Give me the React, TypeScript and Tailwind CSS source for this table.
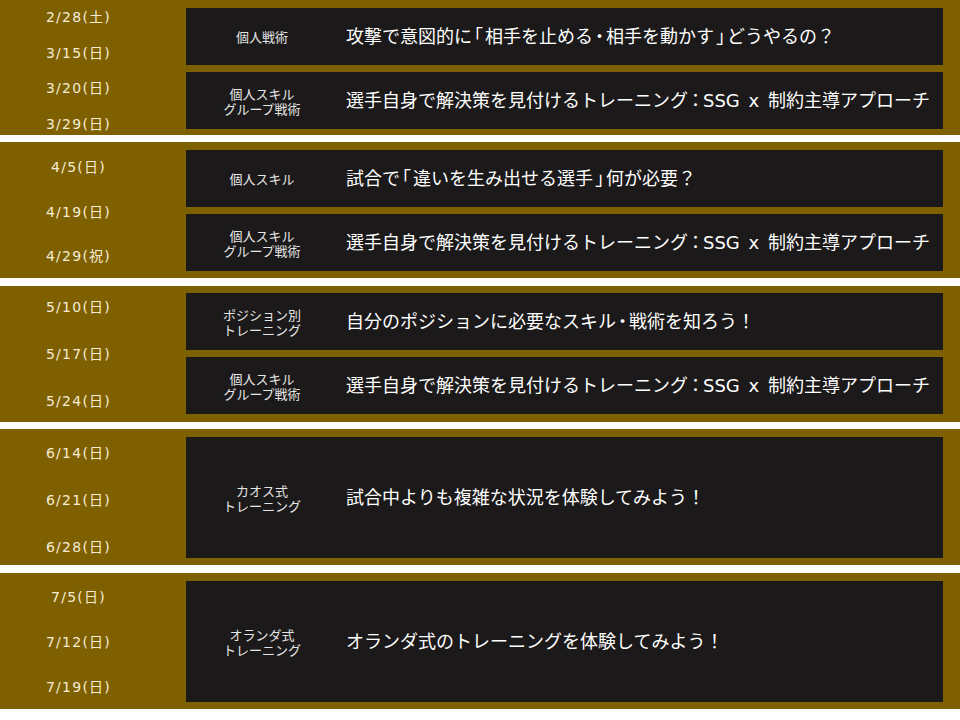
import React from "react";

type Item = { cat: string[]; text: string };
type Sec = {
  dates: string[];
  h: string;
  mt: string;
  datePad: string;
  boxPad: string;
  items: Item[];
};

const SKILL_GROUP = ["個人スキル", "グループ戦術"];
const SSG = "選手自身で解決策を見付けるトレーニング：SSG x 制約主導アプローチ";

const sections: Sec[] = [
  {
    dates: ["2/28(土)", "3/15(日)", "3/20(日)", "3/29(日)"],
    h: "h-[135px]",
    mt: "mt-0",
    datePad: "pt-[7px] pb-[1px]",
    boxPad: "pt-[8px] pb-[6px]",
    items: [
      { cat: ["個人戦術"], text: "攻撃で意図的に「相手を止める・相手を動かす」どうやるの？" },
      { cat: SKILL_GROUP, text: SSG },
    ],
  },
  {
    dates: ["4/5(日)", "4/19(日)", "4/29(祝)"],
    h: "h-[136px]",
    mt: "mt-[7px]",
    datePad: "pt-[15px] pb-[12px]",
    boxPad: "pt-[8px] pb-[7px]",
    items: [
      { cat: ["個人スキル"], text: "試合で「違いを生み出せる選手」何が必要？" },
      { cat: SKILL_GROUP, text: SSG },
    ],
  },
  {
    dates: ["5/10(日)", "5/17(日)", "5/24(日)"],
    h: "h-[136px]",
    mt: "mt-[8px]",
    datePad: "pt-[11px] pb-[11px]",
    boxPad: "pt-[7px] pb-[8px]",
    items: [
      { cat: ["ポジション別", "トレーニング"], text: "自分のポジションに必要なスキル・戦術を知ろう！" },
      { cat: SKILL_GROUP, text: SSG },
    ],
  },
  {
    dates: ["6/14(日)", "6/21(日)", "6/28(日)"],
    h: "h-[136px]",
    mt: "mt-[7px]",
    datePad: "pt-[14px] pb-[8px]",
    boxPad: "pt-[8px] pb-[7px]",
    items: [{ cat: ["カオス式", "トレーニング"], text: "試合中よりも複雑な状況を体験してみよう！" }],
  },
  {
    dates: ["7/5(日)", "7/12(日)", "7/19(日)"],
    h: "h-[136px]",
    mt: "mt-[8px]",
    datePad: "pt-[14px] pb-[12px]",
    boxPad: "pt-[8px] pb-[7px]",
    items: [{ cat: ["オランダ式", "トレーニング"], text: "オランダ式のトレーニングを体験してみよう！" }],
  },
];

function Title({ text }: { text: string }) {
  const parts = text.split(/([「」・：])/);
  return (
    <>
      {parts.map((p, i) => {
        if (p === "") return null;
        if (p === "：")
          return (
            <span key={i} className="mx-[3px] [font-feature-settings:'halt']">
              {p}
            </span>
          );
        if (p === "「" || p === "」" || p === "・")
          return (
            <span key={i} className="mx-[2px] [font-feature-settings:'halt']">
              {p}
            </span>
          );
        return <span key={i}>{p}</span>;
      })}
    </>
  );
}

function Section({ s }: { s: Sec }) {
  return (
    <div className={`flex ${s.h} ${s.mt} bg-[#7f6000]`}>
      <div
        className={`flex w-[157px] shrink-0 flex-col justify-between ${s.datePad} text-center font-['DejaVu_Sans','Noto_Sans_CJK_JP',sans-serif] text-[14px] leading-[20px] tracking-[0.09em] text-[#f6ecd4]`}
      >
        {s.dates.map((d) => (
          <div key={d}>{d}</div>
        ))}
      </div>
      <div className="w-[29px] shrink-0" />
      <div className={`flex w-[757px] shrink-0 flex-col gap-[7px] ${s.boxPad}`}>
        {s.items.map((it, i) => (
          <div key={i} className="flex flex-1 items-center bg-[#1b1919]">
            <div className="flex w-[152px] shrink-0 flex-col items-center text-[13px] leading-[15px] text-[#e6e6e6]">
              {it.cat.map((c) => (
                <div key={c}>{c}</div>
              ))}
            </div>
            <div className="ml-[8px] whitespace-nowrap font-['DejaVu_Sans','Noto_Sans_CJK_JP',sans-serif] text-[18px] leading-[24px] text-white [word-spacing:3px]">
              <Title text={it.text} />
            </div>
          </div>
        ))}
      </div>
    </div>
  );
}

export default function App() {
  return (
    <div className="h-[720px] w-[960px] overflow-hidden bg-white font-['Noto_Sans_CJK_JP','Noto_Sans',sans-serif]">
      {sections.map((s, i) => (
        <Section key={i} s={s} />
      ))}
    </div>
  );
}
